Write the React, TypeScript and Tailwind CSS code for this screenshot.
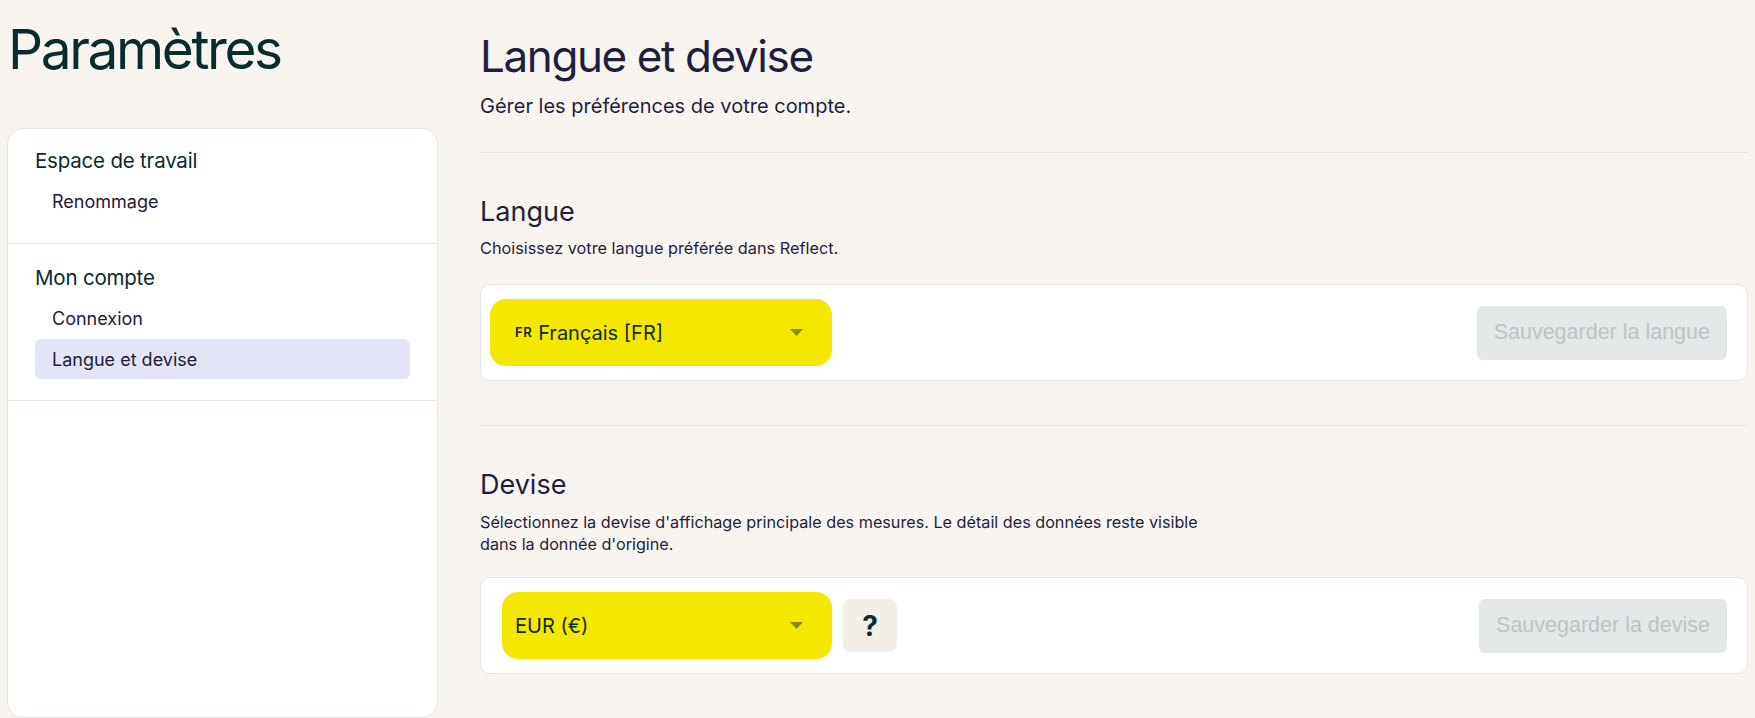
interface NavSection {
  title: string
  items: string[]
}

const sections: NavSection[] = [
  { title: 'Espace de travail', items: ['Renommage'] },
  { title: 'Mon compte', items: ['Connexion', 'Langue et devise'] },
]

const active = 'Langue et devise'

function Caret() {
  return (
    <svg className="h-[7px] w-[13px]" viewBox="0 0 13 7">
      <path d="M0 0h13L6.5 7z" fill="#8a8a12" />
    </svg>
  )
}

interface SelectProps {
  children: React.ReactNode
  className?: string
}

function FakeSelect({ children, className = '' }: SelectProps) {
  return (
    <div
      className={`flex h-[67px] items-center justify-between rounded-[16px] bg-[#f5e800] pr-[29px] text-[20px] text-[#10291f] ${className}`}
    >
      <div className="flex items-center">{children}</div>
      <Caret />
    </div>
  )
}

function SaveButton({ label }: { label: string }) {
  return (
    <button
      type="button"
      disabled
      className="h-[54px] rounded-md bg-[#e4e7e7] px-[17px] font-['Liberation_Sans',Arial,sans-serif] text-[21.5px] text-[#bec4c4]"
    >
      {label}
    </button>
  )
}

export default function App() {
  return (
    <div className="flex min-h-screen gap-[42px] bg-[#f8f5f0] px-[7px] font-['Inter',sans-serif]">
      <aside className="w-[431px] shrink-0">
        <h1 className="pl-px pt-[22px] text-[55px] leading-none tracking-[-2.4px] text-[#0c2b2f]">
          Paramètres
        </h1>
        <nav className="mt-[51px] h-[590px] rounded-2xl border border-[#e3e6e6] bg-white">
          {sections.map((section, i) => (
            <div
              key={section.title}
              className={`border-b border-[#e5e8e8] px-[27px] ${i === 0 ? 'pb-[22px] pt-5' : 'pb-[21px] pt-[22px]'}`}
            >
              <div className="text-[20.5px] leading-6 tracking-[-0.2px] text-[#0d2a2e]">{section.title}</div>
              <ul className="mt-2 flex flex-col gap-px">
                {section.items.map((item) => (
                  <li
                    key={item}
                    className={`flex h-10 items-center rounded-md px-[17px] text-[18px] text-[#1e2038] ${
                      item === active ? 'bg-[#e3e4f5]' : ''
                    }`}
                  >
                    {item}
                  </li>
                ))}
              </ul>
            </div>
          ))}
        </nav>
      </aside>

      <main className="flex-1 pt-[30px] text-[#1f1e3d]">
        <h2 className="text-[44px] leading-[52px] tracking-[-1.4px]">Langue et devise</h2>
        <p className="mt-[10px] text-[20px] leading-7">Gérer les préférences de votre compte.</p>
        <div className="mt-8 border-t border-[#e5e7e6]" />

        <section className="mt-[43px]">
          <h3 className="text-[27px] leading-8">Langue</h3>
          <p className="mt-[9px] text-[16.3px] leading-[22px]">
            Choisissez votre langue préférée dans Reflect.
          </p>
          <div className="mt-[25px] flex items-center justify-between rounded-[10px] border border-[#e3e6e6] bg-white py-[14px] pl-[9px] pr-5">
            <FakeSelect className="w-[342px] pl-[25px]">
              <span className="mr-[6px] text-[13px] font-semibold tracking-[0.5px]">FR</span>
              <span>Français [FR]</span>
            </FakeSelect>
            <SaveButton label="Sauvegarder la langue" />
          </div>
        </section>

        <div className="mt-[44px] border-t border-[#e5e7e6]" />

        <section className="mt-[43px]">
          <h3 className="text-[27px] leading-8">Devise</h3>
          <p className="mt-[10px] max-w-[750px] text-[16.2px] leading-[22px]">
            Sélectionnez la devise d'affichage principale des mesures. Le détail des données reste visible
            dans la donnée d'origine.
          </p>
          <div className="mt-[22px] flex items-center justify-between rounded-[10px] border border-[#e3e6e6] bg-white py-[14px] pl-[21px] pr-5">
            <div className="flex items-center gap-[11px]">
              <FakeSelect className="w-[330px] pl-[13px]">
                <span>EUR (€)</span>
              </FakeSelect>
              <button
                type="button"
                className="flex h-[53px] w-[54px] items-center justify-center rounded-lg bg-[#f3eee7] text-[28px] font-bold text-[#112a2e]"
              >
                ?
              </button>
            </div>
            <SaveButton label="Sauvegarder la devise" />
          </div>
        </section>
      </main>
    </div>
  )
}
